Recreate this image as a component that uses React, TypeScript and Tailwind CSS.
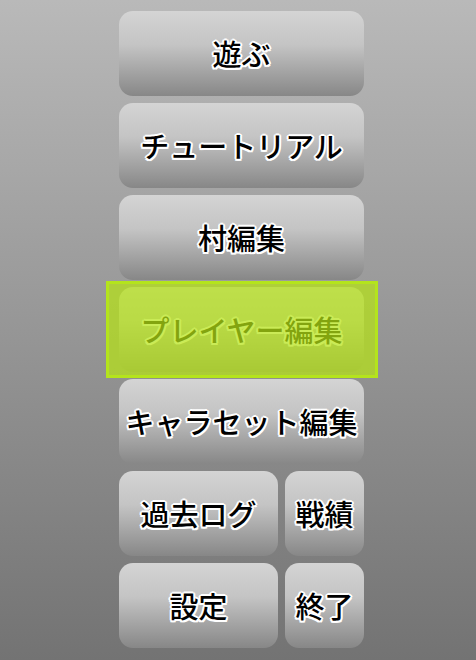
const btn =
  'flex items-center justify-center h-[85px] rounded-[14px] bg-[linear-gradient(to_bottom,#d4d4d4_0%,#c4c4c4_40%,#878787_100%)] text-[29px] text-black font-medium leading-none [text-shadow:2px_0_0_#fff,-2px_0_0_#fff,0_2px_0_#fff,0_-2px_0_#fff,1.5px_1.5px_0_#fff,-1.5px_-1.5px_0_#fff,1.5px_-1.5px_0_#fff,-1.5px_1.5px_0_#fff]';

export default function App() {
  return (
    <div
      className="h-[660px] w-full overflow-hidden bg-[linear-gradient(to_bottom,#b9b9b9,#737373)]"
      style={{ fontFamily: '"Noto Sans CJK JP", "Noto Sans", sans-serif' }}
    >
      <div className="ml-[119px] w-[245px] pt-[11px] flex flex-col gap-[7px]">
        <div className={btn}>遊ぶ</div>
        <div className={btn}>チュートリアル</div>
        <div className={btn}>村編集</div>

        {/* selected item */}
        <div className="relative">
          <div className={btn}>プレイヤー編集</div>
          <div className="absolute -left-[13px] -right-[14px] -top-[6px] -bottom-[6px] border-[3px] border-[#b4e41c] bg-[rgba(181,227,21,0.72)]" />
        </div>

        <div className={btn}>キャラセット編集</div>

        <div className="flex gap-[7px]">
          <div className={`${btn} w-[159px]`}>過去ログ</div>
          <div className={`${btn} flex-1`}>戦績</div>
        </div>
        <div className="flex gap-[7px]">
          <div className={`${btn} w-[159px]`}>設定</div>
          <div className={`${btn} flex-1`}>終了</div>
        </div>
      </div>
    </div>
  );
}
